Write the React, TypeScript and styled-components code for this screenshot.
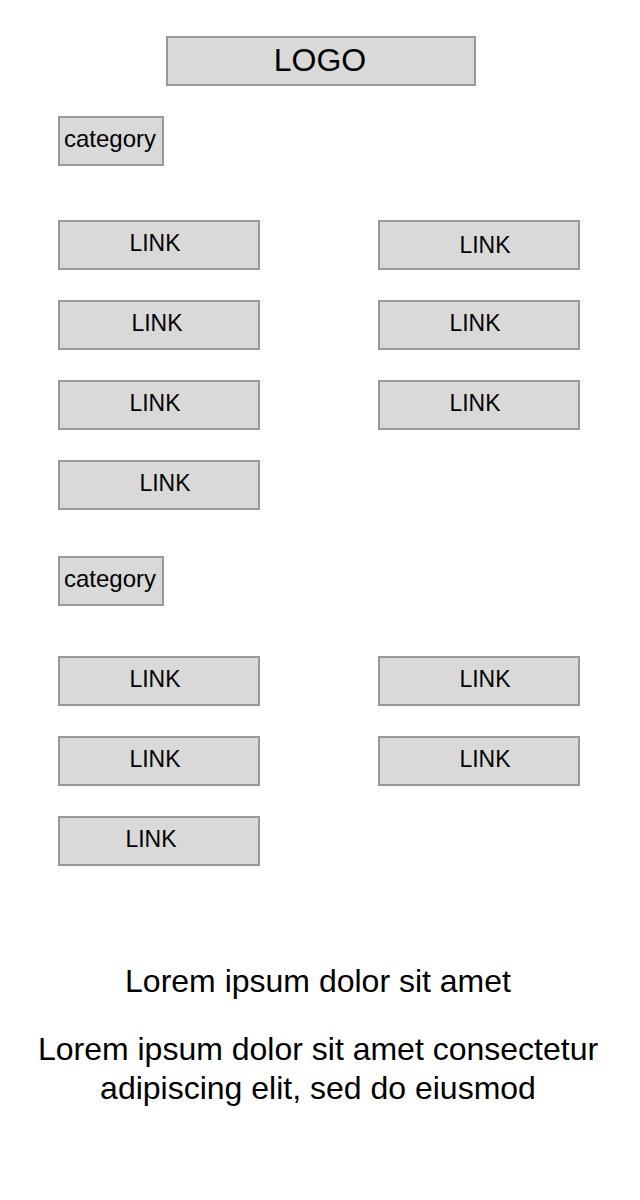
import * as React from 'react';
import styled, { createGlobalStyle } from 'styled-components';

const GlobalStyle = createGlobalStyle`
  body {
    margin: 0;
    background: #ffffff;
    font-family: "Liberation Sans", Arial, sans-serif;
    color: #000000;
  }
  * {
    box-sizing: border-box;
  }
`;

const Page = styled('div')`
  width: 640px;
  min-height: 1200px;
  display: flex;
  flex-direction: column;
  padding-top: 36px;
`;

const Logo = styled('div')`
  align-self: center;
  margin-left: 2px;
  width: 310px;
  height: 50px;
  background: #d9d9d9;
  border: 2px solid #999999;
  display: flex;
  align-items: center;
  justify-content: center;
  font-size: 32px;
  padding-bottom: 2px;
  padding-right: 2px;
`;

const Section = styled('section')<{ $top: number }>`
  display: flex;
  flex-direction: column;
  align-items: flex-start;
  padding: 0 60px 0 58px;
  margin-top: ${(p) => p.$top}px;
`;

const Category = styled('div')`
  width: 106px;
  height: 50px;
  background: #d9d9d9;
  border: 2px solid #999999;
  display: flex;
  align-items: center;
  justify-content: center;
  font-size: 24px;
  padding-bottom: 4px;
  padding-right: 2px;
`;

const LinkGrid = styled('div')<{ $top: number }>`
  display: grid;
  grid-template-columns: 202px 202px;
  column-gap: 118px;
  row-gap: 30px;
  margin-top: ${(p) => p.$top}px;
`;

// $shift nudges the label off-centre, as the wireframe's labels are
const LinkBox = styled('div')<{ $shift: number; $low?: boolean }>`
  height: 50px;
  background: #d9d9d9;
  border: 2px solid #999999;
  display: flex;
  align-items: center;
  justify-content: center;
  font-size: 23px;
  padding-bottom: ${(p) => (p.$low ? 0 : 3)}px;
  padding-left: ${(p) => (p.$shift > 0 ? p.$shift * 2 : 0)}px;
  padding-right: ${(p) => (p.$shift < 0 ? -p.$shift * 2 : 0)}px;
`;

const Footer = styled('footer')`
  margin-top: 96px;
  display: flex;
  flex-direction: column;
  align-items: center;
  text-align: center;
  font-size: 32px;
  line-height: 39px;
`;

const Heading = styled('div')`
  margin-right: 4px;
`;

const Blurb = styled('p')`
  margin: 29px 4px 0 0;
  width: 600px;
`;

export default function App() {
  return (
    <>
      <GlobalStyle />
      <Page>
        <Logo>LOGO</Logo>
        <Section $top={30}>
          <Category>category</Category>
          <LinkGrid $top={54}>
            <LinkBox $shift={-4}>LINK</LinkBox>
            <LinkBox $shift={6} $low>LINK</LinkBox>
            <LinkBox $shift={-2}>LINK</LinkBox>
            <LinkBox $shift={-4}>LINK</LinkBox>
            <LinkBox $shift={-4}>LINK</LinkBox>
            <LinkBox $shift={-4}>LINK</LinkBox>
            <LinkBox $shift={6}>LINK</LinkBox>
          </LinkGrid>
        </Section>
        <Section $top={46}>
          <Category>category</Category>
          <LinkGrid $top={50}>
            <LinkBox $shift={-4}>LINK</LinkBox>
            <LinkBox $shift={6}>LINK</LinkBox>
            <LinkBox $shift={-4}>LINK</LinkBox>
            <LinkBox $shift={6}>LINK</LinkBox>
            <LinkBox $shift={-8}>LINK</LinkBox>
          </LinkGrid>
        </Section>
        <Footer>
          <Heading>Lorem ipsum dolor sit amet</Heading>
          <Blurb>
            Lorem ipsum dolor sit amet consectetur adipiscing elit, sed do
            eiusmod
          </Blurb>
        </Footer>
      </Page>
    </>
  );
}
